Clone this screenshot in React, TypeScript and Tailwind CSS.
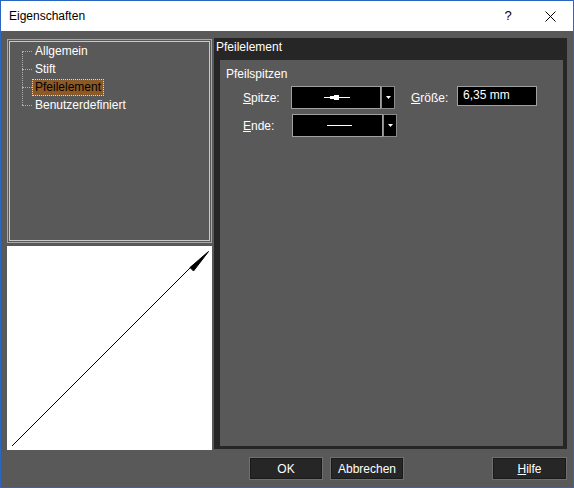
import React from "react";

const font = { fontFamily: '"Liberation Sans", Arial, sans-serif' };

function TreeItem({ label, selected }: { label: string; selected?: boolean }) {
  return (
    <div className="flex items-center h-[18px]">
      <div className="w-[10px] border-t border-dotted border-[#b0b0b0]" />
      {selected ? (
        <span className="ml-[0px] px-[2px] h-[17px] leading-[15px] bg-[#8c5a26] text-black border border-dotted border-[#d8d8d8]">
          {label}
        </span>
      ) : (
        <span className="ml-[3px] text-white leading-[16px]">{label}</span>
      )}
    </div>
  );
}

function Combo({ children, width }: { children: React.ReactNode; width: number }) {
  return (
    <div className="flex h-[23px]">
      <div
        className="flex items-center justify-center bg-black border border-[#a0a0a0] shadow-[inset_1px_1px_0_#000]"
        style={{ width }}
      >
        {children}
      </div>
      <div className="w-[14px] bg-black border border-[#8a8a8a] flex items-center justify-center">
        <svg width="5" height="3" viewBox="0 0 5 3">
          <path d="M0 0H5L2.5 3Z" fill="#ffffff" />
        </svg>
      </div>
    </div>
  );
}

function Button({ children, className }: { children: React.ReactNode; className?: string }) {
  return (
    <div
      className={
        "h-[23px] border border-[#6f6f6f] bg-[#262626] text-white flex items-center justify-center shadow-[inset_0_0_0_1px_#1a1a1a] " +
        (className ?? "")
      }
    >
      {children}
    </div>
  );
}

export default function App() {
  return (
    <div className="w-[574px] h-[488px] bg-[#2b66c2] p-[1px] pt-[1px] text-[12px] overflow-hidden" style={font}>
      {/* title bar */}
      <div className="h-[30px] bg-white flex items-center">
        <span className="ml-[8px] text-black">Eigenschaften</span>
        <span className="ml-auto w-[20px] text-center text-black text-[13px]">?</span>
        <span className="ml-[24px] mr-[15px] w-[16px] flex items-center justify-center">
          <svg width="11" height="11" viewBox="0 0 11 11">
            <path d="M0.5 0.5L10.5 10.5M10.5 0.5L0.5 10.5" stroke="#000" strokeWidth="1" />
          </svg>
        </span>
      </div>

      {/* dialog body */}
      <div className="h-[456px] bg-[#595959] flex flex-col">
        <div className="flex items-start pl-[6px]">
          {/* left column: tree + preview */}
          <div className="w-[205px] flex flex-col mt-[8px]">
            <div className="h-[204px] border border-[#a8a8a8] p-[1px]">
              <div className="h-full border border-[#c8c8c8] pl-[12px]">
                <div className="relative">
                  <div className="absolute left-[0px] top-[9px] h-[54px] border-l border-dotted border-[#b0b0b0]" />
                  <TreeItem label="Allgemein" />
                  <TreeItem label="Stift" />
                  <TreeItem label="Pfeilelement" selected />
                  <TreeItem label="Benutzerdefiniert" />
                </div>
              </div>
            </div>
            <div className="mt-[3px] h-[204px] bg-white">
              <svg width="205" height="204" viewBox="0 0 205 204">
                <line x1="5" y1="200" x2="186" y2="19" stroke="#000" strokeWidth="1" />
                <path d="M201.5 5.5L186.5 25L183 21.5Z" fill="#000" stroke="#000" strokeWidth="1" />
              </svg>
            </div>
          </div>

          {/* right panel */}
          <div className="ml-[2px] mt-[7px] w-[353px] h-[411px] bg-[#262626] flex flex-col">
            <div className="h-[22px] pl-[2px] pt-[1px] text-white leading-[16px]">Pfeilelement</div>
            <div className="flex-1 ml-[6px] mr-[4px] mb-[3px] bg-[#595959] pt-[6px] pl-[6px] text-white">
              <div className="leading-[16px]">Pfeilspitzen</div>
              <div className="flex items-center mt-[4px] ml-[17px]">
                <span className="w-[48px]">
                  <u>S</u>pitze:
                </span>
                <Combo width={90}>
                  <svg width="26" height="5" viewBox="0 0 26 5" className="ml-[2px]">
                    <rect x="0" y="2" width="26" height="1" fill="#fff" />
                    <rect x="6" y="1" width="9" height="3" fill="#fff" />
                    <rect x="10" y="0" width="5" height="5" fill="#fff" />
                  </svg>
                </Combo>
                <span className="ml-[16px] w-[46px]">
                  <u>G</u>röße:
                </span>
                <div className="w-[80px] h-[20px] -mt-[4px] bg-black border border-[#a0a0a0] pl-[5px] leading-[17px]">
                  6,35 mm
                </div>
              </div>
              <div className="flex items-center mt-[5px] ml-[17px]">
                <span className="w-[49px]">
                  <u>E</u>nde:
                </span>
                <Combo width={91}>
                  <svg width="25" height="1" viewBox="0 0 25 1" className="ml-[4px]">
                    <rect x="0" y="0" width="25" height="1" fill="#fff" />
                  </svg>
                </Combo>
              </div>
            </div>
          </div>
        </div>

        {/* button row */}
        <div className="flex mt-[7px] pl-[248px]">
          <Button className="w-[74px]">OK</Button>
          <Button className="w-[74px] ml-[7px]">Abbrechen</Button>
          <Button className="w-[75px] ml-[88px]">
            <span>
              <u>H</u>ilfe
            </span>
          </Button>
        </div>
      </div>
    </div>
  );
}
